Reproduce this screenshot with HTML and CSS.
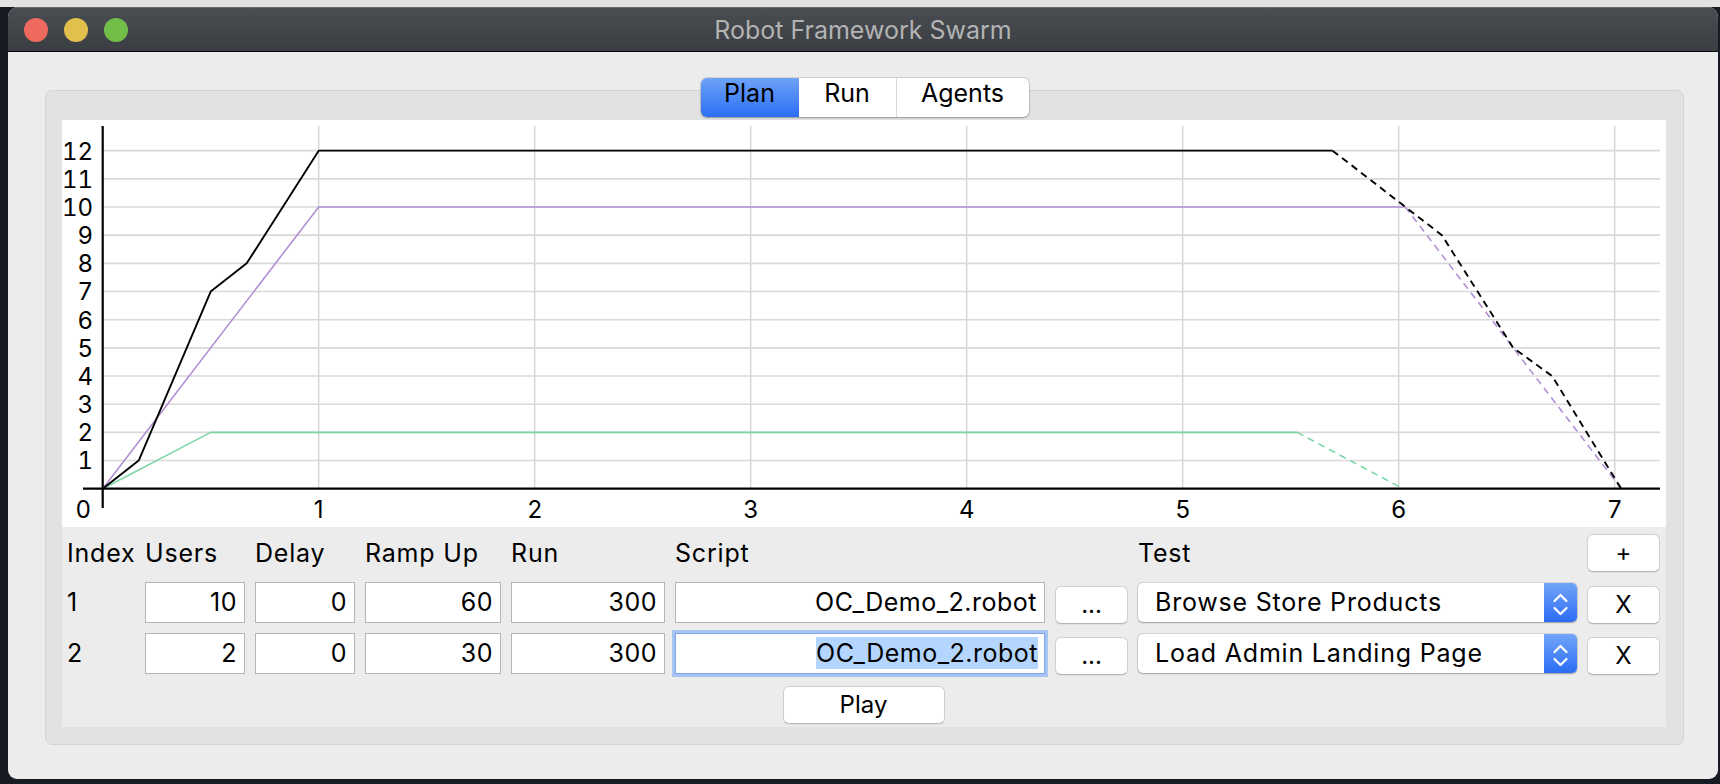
FILE: index.html
```html
<!DOCTYPE html>
<html>
<head>
<meta charset="utf-8">
<title>Robot Framework Swarm</title>
<link rel="stylesheet" href="styles.css">
</head>
<body>
<div class="desk-top"></div>
<div class="desk">
  <div class="window">
    <div class="titlebar">
      <div class="lights"><span class="light red"></span><span class="light yellow"></span><span class="light green"></span></div>
      <div class="title">Robot Framework Swarm</div>
      <div></div>
    </div>
    <div class="content">
      <div class="panel">
        <div class="tabs">
          <div class="tab plan active">Plan</div>
          <div class="tab run">Run</div>
          <div class="tab agents">Agents</div>
        </div>
        <div class="inner">
          <svg class="chart" width="1604" height="407" viewBox="0 0 1604 407">
            <path class="grid" d="M40.7 340.53H1598M40.7 312.36H1598M40.7 284.19H1598M40.7 256.02H1598M40.7 227.85H1598M40.7 199.68H1598M40.7 171.51H1598M40.7 143.34H1598M40.7 115.17H1598M40.7 87H1598M40.7 58.83H1598M40.7 30.66H1598"/>
            <path class="grid" d="M256.7 6V368.7M472.7 6V368.7M688.7 6V368.7M904.7 6V368.7M1120.7 6V368.7M1336.7 6V368.7M1552.7 6V368.7"/>
            <polyline class="ln green-l" points="40.7,368.7 148.7,312.36 1235.2,312.36"/>
            <polyline class="ln green-l dash" points="1235.2,312.36 1341,368.7"/>
            <polyline class="ln purple-l" points="40.7,368.7 256.7,87 1343.2,87"/>
            <polyline class="ln purple-l dash" points="1343.2,87 1559.2,368.7"/>
            <polyline class="ln black-l" points="40.7,368.7 76.7,340.53 148.7,171.51 184.7,143.34 256.7,30.66 1270.6,30.66"/>
            <polyline class="ln black-l dash" points="1270.6,30.66 1379.9,115.2 1451.2,227.85 1490.1,256.02 1559.2,368.7"/>
            <path class="axis" d="M40.7 6V388M21 368.7H1598"/>
            <g class="ylab">
              <text x="31" y="349.3">1</text>
              <text x="31" y="321.2">2</text>
              <text x="31" y="293">3</text>
              <text x="31" y="264.8">4</text>
              <text x="31" y="236.7">5</text>
              <text x="31" y="208.5">6</text>
              <text x="31" y="180.3">7</text>
              <text x="31" y="152.1">8</text>
              <text x="31" y="124">9</text>
              <text x="31" y="95.8">10</text>
              <text x="31" y="67.6">11</text>
              <text x="31" y="39.5">12</text>
              <text x="29" y="398">0</text>
            </g>
            <g class="xlab">
              <text x="256.7" y="398">1</text>
              <text x="472.7" y="398">2</text>
              <text x="688.7" y="398">3</text>
              <text x="904.7" y="398">4</text>
              <text x="1120.7" y="398">5</text>
              <text x="1336.7" y="398">6</text>
              <text x="1552.7" y="398">7</text>
            </g>
          </svg>
          <div class="form">
            <div class="hdr">Index</div>
            <div class="hdr">Users</div>
            <div class="hdr">Delay</div>
            <div class="hdr">Ramp Up</div>
            <div class="hdr">Run</div>
            <div class="hdr">Script</div>
            <div></div>
            <div class="hdr">Test</div>
            <div class="btn plus">+</div>

            <div class="idx">1</div>
            <div class="field">10</div>
            <div class="field">0</div>
            <div class="field">60</div>
            <div class="field">300</div>
            <div class="field">OC_Demo_2.robot</div>
            <div class="btn rowbtn">...</div>
            <div class="select"><span class="sel-text">Browse Store Products</span><span class="stepper"><svg width="33" height="39" viewBox="0 0 33 39"><polyline points="10.5,18 16.5,12 22.5,18"/><polyline points="10.5,25 16.5,31 22.5,25"/></svg></span></div>
            <div class="btn rowbtn">X</div>

            <div class="idx">2</div>
            <div class="field">2</div>
            <div class="field">0</div>
            <div class="field">30</div>
            <div class="field">300</div>
            <div class="field focus"><span class="selected">OC_Demo_2.robot</span></div>
            <div class="btn rowbtn">...</div>
            <div class="select"><span class="sel-text">Load Admin Landing Page</span><span class="stepper"><svg width="33" height="39" viewBox="0 0 33 39"><polyline points="10.5,18 16.5,12 22.5,18"/><polyline points="10.5,25 16.5,31 22.5,25"/></svg></span></div>
            <div class="btn rowbtn">X</div>

            <div class="btn play">Play</div>
          </div>
        </div>
      </div>
    </div>
  </div>
</div>
</body>
</html>
```

FILE: styles.css
```css
html, body {
  margin: 0;
  padding: 0;
}
body {
  width: 1720px;
  height: 784px;
  overflow: hidden;
  background: #171b23;
  font-family: Inter, "Liberation Sans", sans-serif;
  color: #000;
}
.desk-top {
  height: 7px;
  background: #e2e2e2;
}
.desk {
  padding-left: 8px;
}
.window {
  width: 1710px;
  height: 772px;
  border-radius: 10px 10px 9px 9px;
  overflow: hidden;
  background: #ececec;
  display: flex;
  flex-direction: column;
}
.titlebar {
  flex: none;
  height: 42px;
  padding-top: 2px;
  border-bottom: 1px solid #0c0c0c;
  background: linear-gradient(#4a4d52, #3a3d42);
  box-shadow: inset 0 1px 0 #65686d;
  display: grid;
  grid-template-columns: 1fr auto 1fr;
  align-items: center;
}
.lights {
  display: flex;
  gap: 16px;
  padding-left: 16px;
}
.light {
  width: 24px;
  height: 24px;
  border-radius: 50%;
}
.red { background: #ee6a5f; }
.yellow { background: #e1c04e; }
.green { background: #72be48; }
.title {
  color: #b3b3b3;
  font-size: 25px;
}
.content {
  flex: 1;
  padding: 38px 34px 34px 37px;
}
.panel {
  position: relative;
  height: 655px;
  box-sizing: border-box;
  border: 1px solid #d4d4d4;
  border-radius: 7px;
  background: #e2e2e2;
  padding: 29px 17px 17px 16px;
}
.tabs {
  position: absolute;
  top: -13px;
  left: 50%;
  transform: translateX(-50%);
  display: flex;
  height: 39px;
  border-radius: 6px;
  background: #fff;
  box-shadow: 0 0 0 1px rgba(0, 0, 0, 0.1), 0 1px 2px rgba(0, 0, 0, 0.25);
}
.tab {
  height: 39px;
  box-sizing: border-box;
  font-size: 25px;
  line-height: 31px;
  text-align: center;
  color: #000;
}
.tab.plan { width: 98px; border-radius: 6px 0 0 6px; }
.tab.run { width: 97px; }
.tab.agents { width: 133px; border-left: 1px solid #d9d9d9; }
.tab.active {
  background: linear-gradient(#6fa3f8, #2a6ef5);
}
.inner {
  height: 607px;
  display: flex;
  flex-direction: column;
}
.chart {
  display: block;
  flex: none;
  background: #fff;
}
.grid {
  fill: none;
  stroke: #d9d9d9;
  stroke-width: 1.6;
}
.axis {
  fill: none;
  stroke: #000;
  stroke-width: 2.2;
}
.ln {
  fill: none;
  stroke-width: 1.6;
  stroke-linejoin: round;
}
.black-l { stroke: #000; stroke-width: 1.9; }
.purple-l { stroke: #b18fd4; }
.green-l { stroke: #7dd6a6; }
.dash { stroke-dasharray: 7 5; }
.ylab text {
  font-family: Inter, "Liberation Sans", sans-serif;
  font-size: 24px;
  font-variant-numeric: tabular-nums;
  text-anchor: end;
  fill: #000;
}
.xlab text {
  font-family: Inter, "Liberation Sans", sans-serif;
  font-size: 24px;
  text-anchor: middle;
  fill: #000;
}
.form {
  flex: 1;
  background: #ececec;
  display: grid;
  grid-template-columns: 68px 100px 100px 136px 154px 370px 73px 439px 73px;
  grid-template-rows: 38px 41px 41px 40px;
  column-gap: 10px;
  row-gap: 10px;
  padding: 7px 0 0 5px;
  font-size: 25px;
  letter-spacing: 0.8px;
}
.hdr {
  line-height: 38px;
  white-space: nowrap;
}
.idx {
  line-height: 41px;
}
.field {
  height: 41px;
  box-sizing: border-box;
  background: #fff;
  border: 1px solid #b4b4b4;
  text-align: right;
  padding-right: 7px;
  line-height: 39px;
  white-space: nowrap;
  overflow: hidden;
  letter-spacing: 0.5px;
}
.field.focus {
  border-color: #7ea6e6;
  box-shadow: 0 0 0 3px #a7c5f2;
  padding-right: 6px;
}
.selected {
  display: inline-block;
  background: #b4d5fe;
  line-height: 32px;
}
.btn {
  box-sizing: border-box;
  height: 38px;
  background: #fff;
  border: 1px solid #d0d0d0;
  border-bottom-color: #b5b5b5;
  border-radius: 6px;
  box-shadow: 0 1px 1px rgba(0, 0, 0, 0.06);
  text-align: center;
  font-size: 24px;
  line-height: 35px;
  letter-spacing: 0;
  color: #000;
}
.rowbtn {
  margin-top: 4px;
}
.play {
  grid-column: 1 / -1;
  justify-self: center;
  align-self: end;
  width: 162px;
}
.select {
  position: relative;
  align-self: center;
  height: 39px;
  box-sizing: border-box;
  background: #fff;
  border-radius: 5px;
  box-shadow: 0 0 0 1px rgba(0, 0, 0, 0.1), 0 1px 1.5px rgba(0, 0, 0, 0.25);
  padding-left: 17px;
  line-height: 39px;
  white-space: nowrap;
}
.stepper {
  position: absolute;
  top: 0;
  right: 0;
  width: 33px;
  height: 39px;
  border-radius: 0 5px 5px 0;
  background: linear-gradient(#72a4f8, #2b6ef5);
}
.stepper svg {
  display: block;
}
.stepper polyline {
  fill: none;
  stroke: #fff;
  stroke-width: 2.2;
  stroke-linecap: round;
  stroke-linejoin: round;
}
```
